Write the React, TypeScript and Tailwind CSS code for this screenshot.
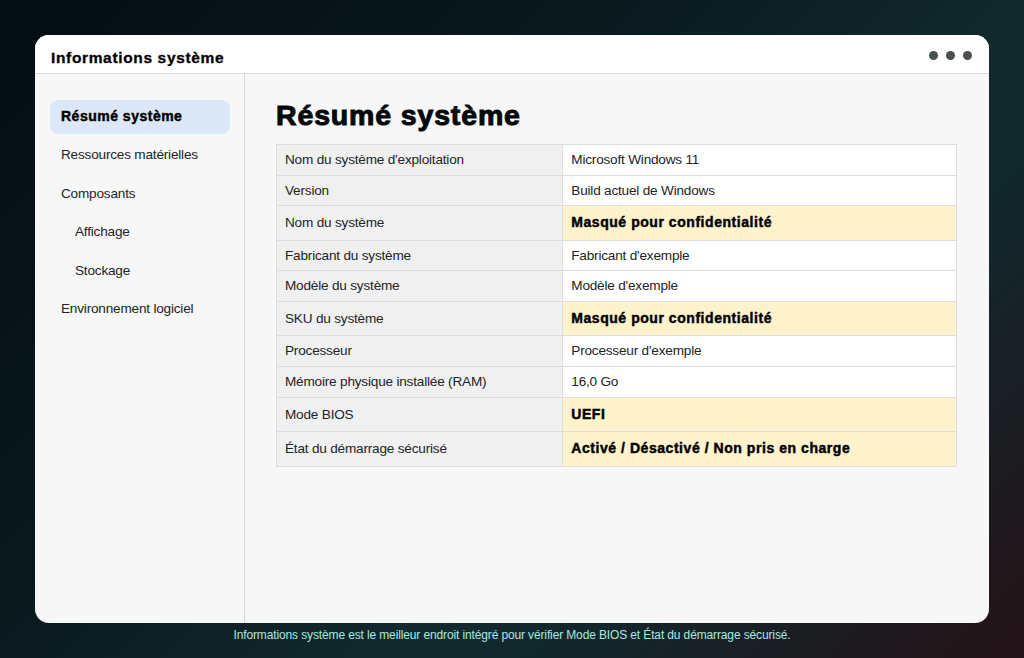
const navItems = [
  { label: 'Résumé système', active: true },
  { label: 'Ressources matérielles' },
  { label: 'Composants' },
  { label: 'Affichage', sub: true },
  { label: 'Stockage', sub: true },
  { label: 'Environnement logiciel' },
]

const rows = [
  { name: "Nom du système d'exploitation", value: 'Microsoft Windows 11' },
  { name: 'Version', value: 'Build actuel de Windows' },
  { name: 'Nom du système', value: 'Masqué pour confidentialité', hot: true },
  { name: 'Fabricant du système', value: "Fabricant d'exemple" },
  { name: 'Modèle du système', value: "Modèle d'exemple" },
  { name: 'SKU du système', value: 'Masqué pour confidentialité', hot: true },
  { name: 'Processeur', value: "Processeur d'exemple" },
  { name: 'Mémoire physique installée (RAM)', value: '16,0 Go' },
  { name: 'Mode BIOS', value: 'UEFI', hot: true },
  { name: 'État du démarrage sécurisé', value: 'Activé / Désactivé / Non pris en charge', hot: true },
]

export default function App() {
  return (
    <div className="flex h-[658px] w-[1024px] flex-col overflow-hidden bg-[linear-gradient(135deg,#040d10_0%,#0a1a1e_38%,#12292d_62%,#12272b_72%,#241217_100%)] px-[35px] pt-[35px] font-['Liberation_Sans',Arial,sans-serif]">
      {/* Window */}
      <div className="flex h-[588px] flex-col overflow-hidden rounded-[14px] bg-[#f7f7f7]">
        <div className="flex h-[39px] shrink-0 items-center justify-between border-b border-[#dddddd] bg-white pl-4 pr-[17px]">
          <span className="mt-[8px] text-[15.5px] font-bold tracking-[0.65px] text-black [-webkit-text-stroke:0.3px_#000]">Informations système</span>
          <div className="mt-[2px] flex gap-2">
            <span className="h-[9px] w-[9px] rounded-full bg-[#4a4f52]" />
            <span className="h-[9px] w-[9px] rounded-full bg-[#4a4f52]" />
            <span className="h-[9px] w-[9px] rounded-full bg-[#4a4f52]" />
          </div>
        </div>
        <div className="flex min-h-0 flex-1">
          {/* Sidebar */}
          <div className="w-[210px] shrink-0 border-r border-[#d6d6d6] pl-[15px] pr-[14px] pt-[26px]">
            {navItems.map((item) => (
              <div
                key={item.label}
                className={`mb-[5px] flex h-[33.5px] items-center rounded-lg ${item.sub ? 'pl-[25px]' : 'pl-[11px]'} ${item.active ? 'bg-[#dce8f8] text-[14px] font-bold tracking-[0.5px] text-black [-webkit-text-stroke:0.45px_#000]' : 'text-[13.6px] tracking-[-0.2px] text-[#1d2328]'}`}
              >
                {item.label}
              </div>
            ))}
          </div>
          {/* Main */}
          <div className="min-w-0 flex-1 pl-[31px] pr-[32px] pt-[25px]">
            <h1 className="mb-[13px] text-[28.5px] leading-[32px] font-black tracking-[0.85px] text-[#05090c] [-webkit-text-stroke:1px_#05090c]">Résumé système</h1>
            <table className="w-full border-collapse text-[13.6px] tracking-[-0.2px] text-[#1d2328]">
              <tbody>
                {rows.map((row, i) => (
                  <tr key={i}>
                    <td className="w-[42.1%] border border-[#dddddd] bg-[#f0f0f0] px-2 py-[7px] align-baseline leading-[15.6px]">{row.name}</td>
                    <td className={`border border-[#dddddd] px-2 py-[7px] align-baseline ${row.hot ? 'bg-[#fff3cd] text-[14px] font-bold leading-[19.5px] tracking-[0.55px] text-black [-webkit-text-stroke:0.45px_#000]' : 'bg-white leading-[15.6px]'}`}>
                      {row.value}
                    </td>
                  </tr>
                ))}
              </tbody>
            </table>
          </div>
        </div>
      </div>
      <p className="mt-[3px] text-center text-[12px] tracking-[-0.13px] text-[#a9e8e0]">
        Informations système est le meilleur endroit intégré pour vérifier Mode BIOS et État du démarrage sécurisé.
      </p>
    </div>
  )
}
